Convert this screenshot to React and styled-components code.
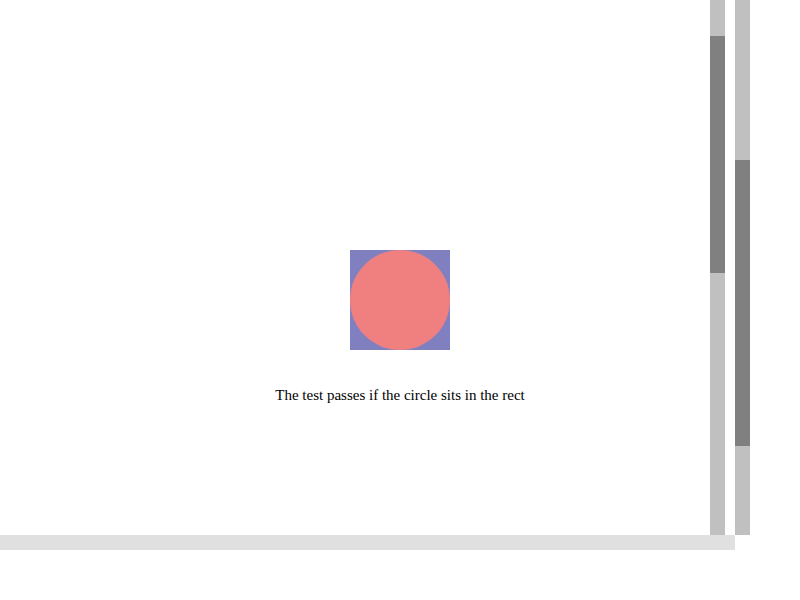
import React from "react";
import styled, { createGlobalStyle } from "styled-components";

const GlobalStyle = createGlobalStyle`
  html, body {
    margin: 0;
    padding: 0;
    background: #ffffff;
  }
  body {
    font-family: "Liberation Serif", "Times New Roman", serif;
  }
`;

// Page frame: content, two vertical scroll tracks, one horizontal track
const Frame = styled.div`
  width: 800px;
  height: 600px;
  display: grid;
  grid-template-columns: 710px 15px 10px 15px 50px;
  grid-template-rows: 535px 15px 50px;
  overflow: hidden;
`;

const Content = styled.div`
  grid-column: 1;
  grid-row: 1;
  width: 800px;
  padding-top: 250px;
  display: flex;
  flex-direction: column;
  align-items: center;
`;

const Rect = styled.div`
  width: 100px;
  height: 100px;
  background: #8080c0;
  display: flex;
`;

const Circle = styled.div`
  flex: 1;
  border-radius: 50%;
  background: #f08080;
`;

const Caption = styled.p`
  margin: 37px 0 0;
  font-size: 15px;
  color: #000;
`;

const Track = styled.div`
  grid-column: ${(p) => p.$col};
  grid-row: 1;
  background: #c0c0c0;
  display: flex;
  flex-direction: column;
  position: relative;
  z-index: 1;
`;

const Thumb = styled.div`
  margin-top: ${(p) => p.$top}px;
  height: ${(p) => p.$size}px;
  background: #808080;
`;

const HTrack = styled.div`
  grid-column: 1 / 4;
  grid-row: 2;
  background: #e0e0e0;
`;

export default function App() {
  return (
    <>
      <GlobalStyle />
      <Frame>
        <Content>
          <Rect>
            <Circle />
          </Rect>
          <Caption>The test passes if the circle sits in the rect</Caption>
        </Content>
        <Track $col={2}>
          <Thumb $top={36} $size={237} />
        </Track>
        <Track $col={4}>
          <Thumb $top={160} $size={286} />
        </Track>
        <HTrack />
      </Frame>
    </>
  );
}
